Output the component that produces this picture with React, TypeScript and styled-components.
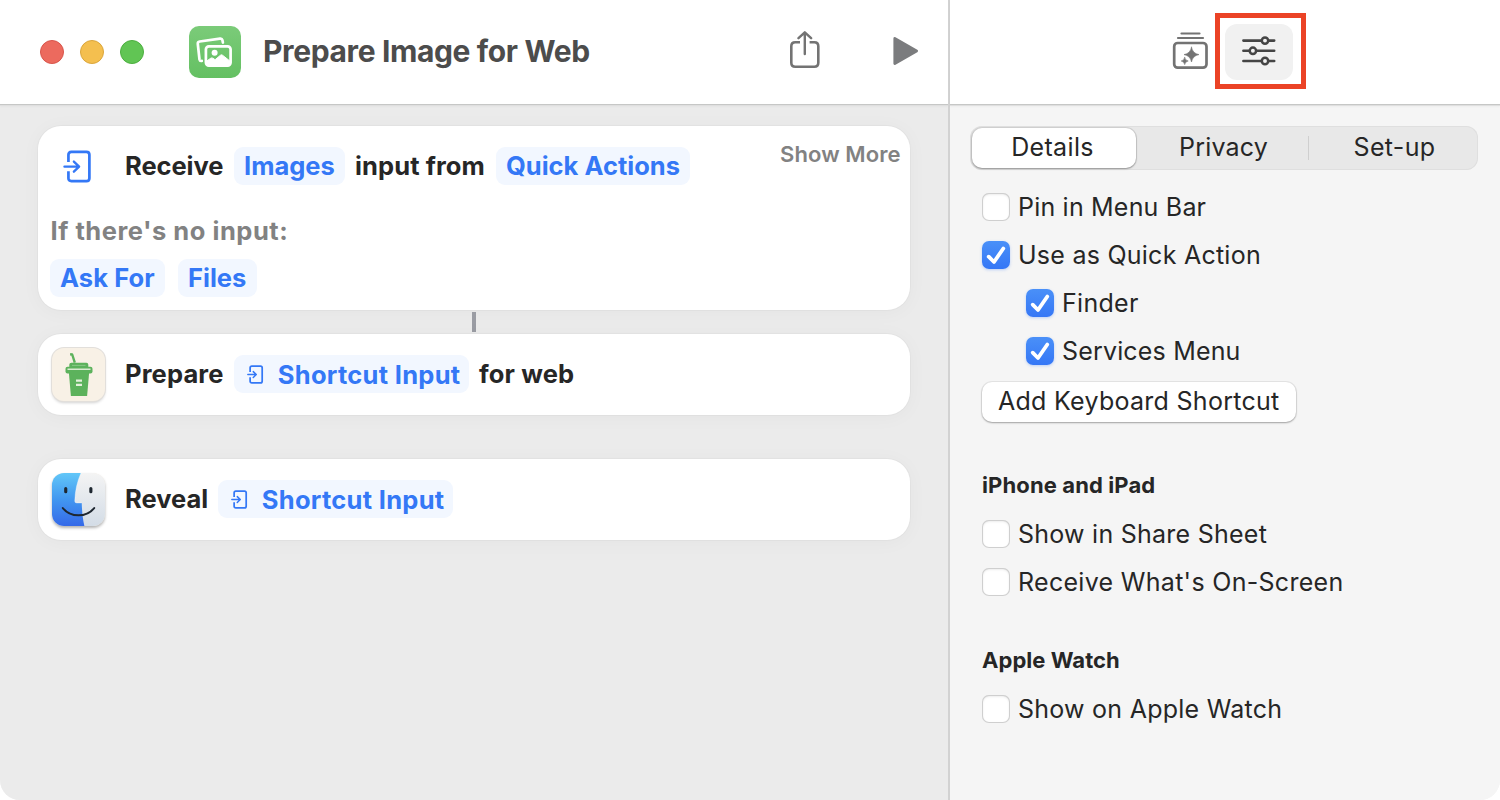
import React from 'react';
import styled, { createGlobalStyle, css } from 'styled-components';

const GlobalStyle = createGlobalStyle`
  * { box-sizing: border-box; }
  body { margin: 0; background: #fff; font-family: Inter, "Liberation Sans", sans-serif; }
  svg { display: block; flex: none; }
`;

const Window = styled.div`
  display: flex;
  width: 1500px;
  height: 800px;
  overflow: hidden;
  border-radius: 0 0 20px 20px;
  background: #f5f5f5;
`;

const EditorPane = styled.main`
  display: flex;
  flex-direction: column;
  width: 948px;
  background: #ebebeb;
`;

const Divider = styled.div`
  width: 2px;
  background: #d2d2d2;
`;

const Sidebar = styled.aside`
  display: flex;
  flex-direction: column;
  width: 550px;
  background: #f5f5f5;
`;

const toolbar = css`
  display: flex;
  align-items: center;
  flex: none;
  height: 106px;
  padding-bottom: 2px;
  background: #fff;
  border-bottom: 1px solid #dfdfdf;
  box-shadow: inset 0 -1px 0 #c6c7c6, 0 1px 2px rgba(0, 0, 0, 0.03);
`;

const Toolbar = styled.header`
  ${toolbar}
  padding-left: 40px;
`;

const SidebarToolbar = styled.header`
  ${toolbar}
  padding-left: 222px;
`;

const Lights = styled.div`
  display: flex;
  gap: 16px;
`;

const Light = styled.span<{ $fill: string; $edge: string }>`
  width: 24px;
  height: 24px;
  border-radius: 50%;
  background: ${(p) => p.$fill};
  border: 1px solid ${(p) => p.$edge};
`;

const ShortcutIcon = styled.div`
  width: 52px;
  height: 52px;
  margin-left: 45px;
  border-radius: 10px;
  background: linear-gradient(#7bcb79, #64c062);
`;

const Text = styled.span<{ $size?: number; $weight?: number; $spacing?: number; $color?: string }>`
  font-size: ${(p) => p.$size ?? 25}px;
  font-weight: ${(p) => p.$weight ?? 400};
  letter-spacing: ${(p) => p.$spacing ?? 0}px;
  color: ${(p) => p.$color ?? '#262626'};
  line-height: 32px;
  white-space: nowrap;
`;

const Title = styled.h1`
  width: 527px;
  margin: 0 0 2px 22px;
  font-size: 30px;
  font-weight: 650;
  line-height: 36px;
  letter-spacing: -0.37px;
  color: #4c4c4c;
  white-space: nowrap;
`;

const ShareButton = styled.div`
  width: 103px;
  padding-bottom: 3px;
`;

const PlayButton = styled.div`
  padding-bottom: 2px;
`;

const LibraryButton = styled.div`
  padding-bottom: 4px;
`;

const Canvas = styled.section`
  display: flex;
  flex-direction: column;
  align-items: center;
  padding: 20px 38px 0;
`;

const Card = styled.article<{ $height: number; $gap?: number }>`
  display: flex;
  flex-direction: column;
  width: 872px;
  height: ${(p) => p.$height}px;
  margin-top: ${(p) => p.$gap ?? 0}px;
  padding: 12px;
  border-radius: 23px;
  background: #fff;
  box-shadow: 0 0 0 1px rgba(0, 0, 0, 0.025), 0 2px 20px rgba(0, 0, 0, 0.035);
`;

const CardRow = styled.div`
  display: flex;
  align-items: center;
  height: 56px;
`;

const InputHeader = styled.div`
  display: flex;
  justify-content: space-between;
  align-items: flex-start;
  height: 57px;
`;

const IconSlot = styled.div`
  display: flex;
  justify-content: center;
  width: 57px;
  margin-right: 18px;
`;

const InputIcon = styled.span`
  padding: 1px 1px 0 0;
`;

const Word = styled.span<{ $width: number; $spacing?: number; $after?: boolean }>`
  width: ${(p) => p.$width}px;
  padding-left: ${(p) => (p.$after ? 10 : 0)}px;
  padding-bottom: 1px;
  font-size: 25.5px;
  font-weight: 650;
  line-height: 32px;
  letter-spacing: ${(p) => p.$spacing ?? 0}px;
  color: #262626;
  white-space: nowrap;
`;

const Token = styled.span<{ $width: number; $spacing?: number }>`
  display: flex;
  align-items: center;
  gap: 13px;
  width: ${(p) => p.$width}px;
  height: 38px;
  padding: 0 9px 1px 10px;
  border-radius: 9px;
  background: #f2f7ff;
  font-size: 25.5px;
  font-weight: 650;
  line-height: 32px;
  letter-spacing: ${(p) => p.$spacing ?? 0}px;
  color: #3478f6;
  white-space: nowrap;
`;

const VariableToken = styled(Token)`
  gap: 14px;
  padding: 1px 9px 0 10px;
`;

const TokenIcon = styled.span`
  padding-left: 3px;
`;

const ShowMore = styled.div`
  width: 120px;
  margin-right: -2px;
`;

const Fallback = styled.div`
  margin: 20px 0 0 0.5px;
`;

const TokenRow = styled.div`
  display: flex;
  gap: 13px;
  margin-top: 12px;
`;

const Connector = styled.div`
  width: 4px;
  height: 20px;
  margin: 2px 0;
  background: #9a9ca3;
`;

const AppTile = styled.div`
  width: 53px;
  height: 53px;
  margin-top: 1px;
  border-radius: 12px;
  overflow: hidden;
  background: #f8f1e6;
  box-shadow: 0 0 0 1px #e2dfdb, 0 2px 3px rgba(0, 0, 0, 0.18);
`;

const FinderTile = styled(AppTile)`
  box-shadow: 0 2px 3px rgba(0, 0, 0, 0.3);
`;

const ToggleButton = styled.div`
  position: relative;
  display: flex;
  align-items: center;
  justify-content: center;
  width: 68px;
  height: 56px;
  margin-left: 16px;
  padding-bottom: 2px;
  border-radius: 12px;
  background: #f1f1f1;
`;

const Highlight = styled.div`
  position: absolute;
  inset: -11px -13px -9px -10px;
  border: 5px solid #eb4326;
`;

const SidebarBody = styled.div`
  display: flex;
  flex-direction: column;
  padding: 20px 22px 0 20px;
`;

const Segments = styled.div`
  display: flex;
  align-items: center;
  height: 44px;
  padding: 0 1px 0 2px;
  border-radius: 12px;
  background: #e8e8e8;
  box-shadow: inset 0 0 0 1px #dfdfdf;
`;

const Segment = styled.div<{ $width: number; $selected?: boolean }>`
  display: flex;
  align-items: center;
  justify-content: center;
  flex: none;
  width: ${(p) => p.$width}px;
  height: 40px;
  padding: 0 0 2px 3px;
  border-radius: 10px;
  ${(p) =>
    p.$selected &&
    css`
      padding: 0 3px 2px 0;
      background: #fff;
      box-shadow: 0 0 0 1px rgba(0, 0, 0, 0.09), 0 1px 2px rgba(0, 0, 0, 0.3);
    `}
`;

const SegmentDivider = styled.div`
  width: 1px;
  height: 24px;
  background: #cfcfcf;
`;

const Options = styled.div<{ $top?: number }>`
  display: flex;
  flex-direction: column;
  align-items: flex-start;
  padding: ${(p) => p.$top ?? 0}px 0 0 12px;
`;

const Option = styled.label<{ $nested?: boolean }>`
  display: flex;
  align-items: center;
  gap: 8px;
  height: 48px;
  padding-left: ${(p) => (p.$nested ? 44 : 0)}px;
`;

const Box = styled.span<{ $checked?: boolean }>`
  display: flex;
  width: 28px;
  height: 28px;
  border-radius: 7px;
  ${(p) =>
    p.$checked
      ? css`
          background: linear-gradient(#4a90f8, #3577f6);
          box-shadow: 0 1px 3px rgba(52, 120, 246, 0.3);
        `
      : css`
          background: #fff;
          box-shadow: inset 0 0 0 1px #cfcfcf, inset 0 1px 3px rgba(0, 0, 0, 0.15);
        `}
`;

const PushButton = styled.div`
  display: flex;
  align-items: center;
  width: 314px;
  height: 40px;
  margin-top: 7px;
  padding: 0 0 2px 16px;
  border-radius: 10px;
  background: #fff;
  box-shadow: 0 0 0 1px rgba(0, 0, 0, 0.06), 0 1px 2px rgba(0, 0, 0, 0.3);
`;

const PhotosGlyph = () => (
  <svg width="52" height="52" viewBox="0 0 52 52" fill="none" stroke="#fff" strokeWidth="2.7" strokeLinejoin="round" strokeLinecap="round">
    <path d="M12.800 34.900l-.6.100c-1 .1-1.500-.5-1.700-1.500L8.800 18c-.2-1.400.5-2.200 1.900-2.500L31 12.600c1.300-.2 2.100.3 2.400 1.500l.5 2.500" />
    <rect x="16.900" y="20.300" width="24.700" height="19.300" rx="3" />
    <path d="M17 35.500l4.800-3.300q1-.6 2 0l1.700 1.100q.7.400 1.400-.2l4.600-3.900q1-.8 2 0l8 6.300v2c0 1.400-.8 2.200-2.200 2.200H19.200c-1.400 0-2.200-.8-2.200-2.200z" fill="#fff" strokeWidth="1" />
    <circle cx="25.600" cy="26.700" r="3" fill="#fff" stroke="none" />
  </svg>
);

const ShareGlyph = () => (
  <svg width="30" height="38" viewBox="0 0 30 38" fill="none" stroke="#737373" strokeWidth="2.6" strokeLinecap="round" strokeLinejoin="round">
    <path d="M10 11.300H5.300C2.700 11.300 1.300 12.700 1.300 15.300V31.700C1.300 34.300 2.700 35.700 5.300 35.700H24.300C26.900 35.700 28.300 34.300 28.300 31.700V15.300C28.300 12.700 26.900 11.300 24.300 11.300H19.600" strokeLinecap="butt" />
    <path d="M14.800 23V1.900M8.500 7.200L14.800 1.300L21.100 7.200" strokeWidth="2.4" />
  </svg>
);

const PlayGlyph = () => (
  <svg width="26" height="30" viewBox="0 0 26 30">
    <path d="M1.800 2.500L23.600 15L1.800 27.500Z" fill="#7b7c7e" stroke="#7b7c7e" strokeWidth="2.8" strokeLinejoin="round" />
  </svg>
);

const LibraryGlyph = () => (
  <svg width="37" height="40" viewBox="0 0 37 40" fill="none" stroke="#737373" strokeLinecap="round">
    <path d="M9.500 3.500H27.500M6 8H31" strokeWidth="2.2" />
    <rect x="2.200" y="13" width="32.300" height="24.700" rx="3.500" strokeWidth="2.7" />
    <path d="M19.500 17.200Q20.600 23.500 27 24.600Q20.600 25.700 19.500 32Q18.400 25.700 12 24.600Q18.400 23.500 19.500 17.200Z M12.700 27.500Q13.200 30.500 16.200 31Q13.200 31.500 12.700 34.600Q12.200 31.500 9.200 31Q12.200 30.500 12.700 27.500Z" fill="#737373" strokeWidth=".6" />
  </svg>
);

const SlidersGlyph = () => (
  <svg width="34" height="30" viewBox="0 0 34 30" fill="#f1f1f1" stroke="#454545" strokeWidth="2.6" strokeLinecap="round">
    <path d="M1.400 4.600H32.200M1.400 14.800H32.200M1.400 25H32.200" />
    <circle cx="23" cy="4.600" r="3.200" strokeWidth="2.5" />
    <circle cx="10.900" cy="14.800" r="3.200" strokeWidth="2.5" />
    <circle cx="23" cy="25" r="3.200" strokeWidth="2.5" />
  </svg>
);

const InputGlyph = ({ size = 33, stroke = 2.8 }: { size?: number; stroke?: number }) => (
  <svg width={(size * 30) / 34} height={size} viewBox="0 0 30 34" fill="none" stroke="#3478f6" strokeWidth={stroke} strokeLinecap="round" strokeLinejoin="round">
    <path d="M5.600 12.400V5C5.600 3 6.600 2 8.600 2H24.200C26.200 2 27.200 3 27.200 5V29C27.200 31 26.200 32 24.200 32H8.600C6.600 32 5.600 31 5.600 29V21.800" strokeLinecap="butt" />
    <path d="M1.500 17.100H16.400M11.200 11.900L16.600 17.100L11.200 22.300" strokeWidth={stroke * 0.86} />
  </svg>
);

const CupGlyph = () => (
  <svg width="53" height="53" viewBox="0.5 0.5 53 53">
    <path d="M18.600 6.800L20.700 7L23.300 15.200" fill="none" stroke="#5cb25c" strokeWidth="2.4" strokeLinejoin="round" />
    <rect x="17.800" y="15.200" width="19" height="6" rx="2" fill="#5cb25c" />
    <path d="M20.500 17.900H34" stroke="#8fc98c" strokeWidth=".9" />
    <rect x="14" y="19.200" width="27" height="6.800" rx="2" fill="#5cb25c" />
    <path d="M16 21.800H39" stroke="#d8ead0" strokeWidth="1.5" />
    <path d="M17.400 25.500H37.600L35.600 48.500H19.400Z" fill="#5cb25c" />
    <path d="M24.500 32H30.500V34.300H24.500ZM24.500 36.200H30.500V38.500H24.500Z" fill="#e4f0dc" />
  </svg>
);

const FinderGlyph = () => (
  <svg width="53" height="53" viewBox="0 0 54 54">
    <defs>
      <linearGradient id="finderBlue" x1="0" y1="0" x2="0" y2="1">
        <stop offset="0" stopColor="#62c7f8" />
        <stop offset="0.5" stopColor="#4297f0" />
        <stop offset="1" stopColor="#3569e8" />
      </linearGradient>
      <linearGradient id="finderLight" x1="0" y1="0" x2="0" y2="1">
        <stop offset="0" stopColor="#f4f4f4" />
        <stop offset="1" stopColor="#d3dce6" />
      </linearGradient>
    </defs>
    <path d="M0 0H54V54H0Z" fill="url(#finderLight)" />
    <path d="M0 0H29.500C25.500 9 23.600 18 23.200 28.500Q23.100 30.500 25 30.500H30.300C30.500 38 31.200 46 33 54H0Z" fill="url(#finderBlue)" />
    <path d="M29.500 0C25.500 9 23.600 18 23.200 28.500Q23.100 30.500 25 30.500H30.300" fill="none" stroke="#fff" strokeOpacity=".45" strokeWidth=".8" />
    <path d="M14 15.800V19M39.600 15.800V19" stroke="#1e2730" strokeWidth="3.2" strokeLinecap="round" />
    <path d="M11 35.700C19 45.600 35 45.600 43 35.700" fill="none" stroke="#1e2730" strokeWidth="2" strokeLinecap="round" />
  </svg>
);

const CheckGlyph = () => (
  <svg width="28" height="28" viewBox="0 0 28 28" fill="none" stroke="#fff" strokeWidth="3.8" strokeLinecap="round" strokeLinejoin="round">
    <path d="M6.700 15.700L12 21L21.300 7.500" />
  </svg>
);

interface CheckProps {
  label: string;
  spacing?: number;
  checked?: boolean;
  nested?: boolean;
}

const CheckOption = ({ label, spacing, checked, nested }: CheckProps) => (
  <Option $nested={nested}>
    <Box $checked={checked}>{checked && <CheckGlyph />}</Box>
    <Text $spacing={spacing}>{label}</Text>
  </Option>
);

const ShortcutInput = () => (
  <VariableToken $width={235} $spacing={0.28}>
    <TokenIcon><InputGlyph size={19} stroke={3.1} /></TokenIcon>
    Shortcut Input
  </VariableToken>
);

export default function App() {
  return (
    <>
      <GlobalStyle />
      <Window>
        <EditorPane>
          <Toolbar>
            <Lights>
              <Light $fill="#ec6a5e" $edge="#d8554b" />
              <Light $fill="#f4bf4f" $edge="#dba63c" />
              <Light $fill="#61c554" $edge="#4caf3f" />
            </Lights>
            <ShortcutIcon><PhotosGlyph /></ShortcutIcon>
            <Title>Prepare Image for Web</Title>
            <ShareButton><ShareGlyph /></ShareButton>
            <PlayButton><PlayGlyph /></PlayButton>
          </Toolbar>
          <Canvas>
            <Card $height={184}>
              <InputHeader>
                <CardRow>
                  <IconSlot><InputIcon><InputGlyph /></InputIcon></IconSlot>
                  <Word $width={109} $spacing={-0.05}>Receive</Word>
                  <Token $width={111}>Images</Token>
                  <Word $width={151} $spacing={0.1} $after>input from</Word>
                  <Token $width={194}>Quick Actions</Token>
                </CardRow>
                <ShowMore><Text $size={22} $weight={570} $spacing={0.1} $color="#828282">Show More</Text></ShowMore>
              </InputHeader>
              <Fallback><Text $size={25.5} $weight={650} $spacing={0.53} $color="#828282">If there's no input:</Text></Fallback>
              <TokenRow>
                <Token $width={115} $spacing={0.1}>Ask For</Token>
                <Token $width={79}>Files</Token>
              </TokenRow>
            </Card>
            <Connector />
            <Card $height={81}>
              <CardRow>
                <IconSlot><AppTile><CupGlyph /></AppTile></IconSlot>
                <Word $width={109} $spacing={0.15}>Prepare</Word>
                <ShortcutInput />
                <Word $width={120} $spacing={0.15} $after>for web</Word>
              </CardRow>
            </Card>
            <Card $height={81} $gap={44}>
              <CardRow>
                <IconSlot><FinderTile><FinderGlyph /></FinderTile></IconSlot>
                <Word $width={93}>Reveal</Word>
                <ShortcutInput />
              </CardRow>
            </Card>
          </Canvas>
        </EditorPane>
        <Divider />
        <Sidebar>
          <SidebarToolbar>
            <LibraryButton><LibraryGlyph /></LibraryButton>
            <ToggleButton><SlidersGlyph /><Highlight /></ToggleButton>
          </SidebarToolbar>
          <SidebarBody>
            <Segments>
              <Segment $width={164} $selected><Text $spacing={0.35}>Details</Text></Segment>
              <Segment $width={172}><Text $spacing={0.2}>Privacy</Text></Segment>
              <SegmentDivider />
              <Segment $width={168}><Text $spacing={0.35}>Set-up</Text></Segment>
            </Segments>
            <Options $top={13}>
              <CheckOption label="Pin in Menu Bar" spacing={0.2} />
              <CheckOption label="Use as Quick Action" spacing={0.25} checked />
              <CheckOption label="Finder" spacing={0.3} checked nested />
              <CheckOption label="Services Menu" spacing={0.17} checked nested />
              <PushButton><Text $spacing={0.28}>Add Keyboard Shortcut</Text></PushButton>
            </Options>
            <Options $top={47}>
              <Text $size={22} $weight={650} $spacing={0.12}>iPhone and iPad</Text>
            </Options>
            <Options $top={9}>
              <CheckOption label="Show in Share Sheet" spacing={0.25} />
              <CheckOption label="Receive What's On-Screen" spacing={0.3} />
            </Options>
            <Options $top={38}>
              <Text $size={22} $weight={650} $spacing={0.05}>Apple Watch</Text>
            </Options>
            <Options $top={9}>
              <CheckOption label="Show on Apple Watch" spacing={0.25} />
            </Options>
          </SidebarBody>
        </Sidebar>
      </Window>
    </>
  );
}
